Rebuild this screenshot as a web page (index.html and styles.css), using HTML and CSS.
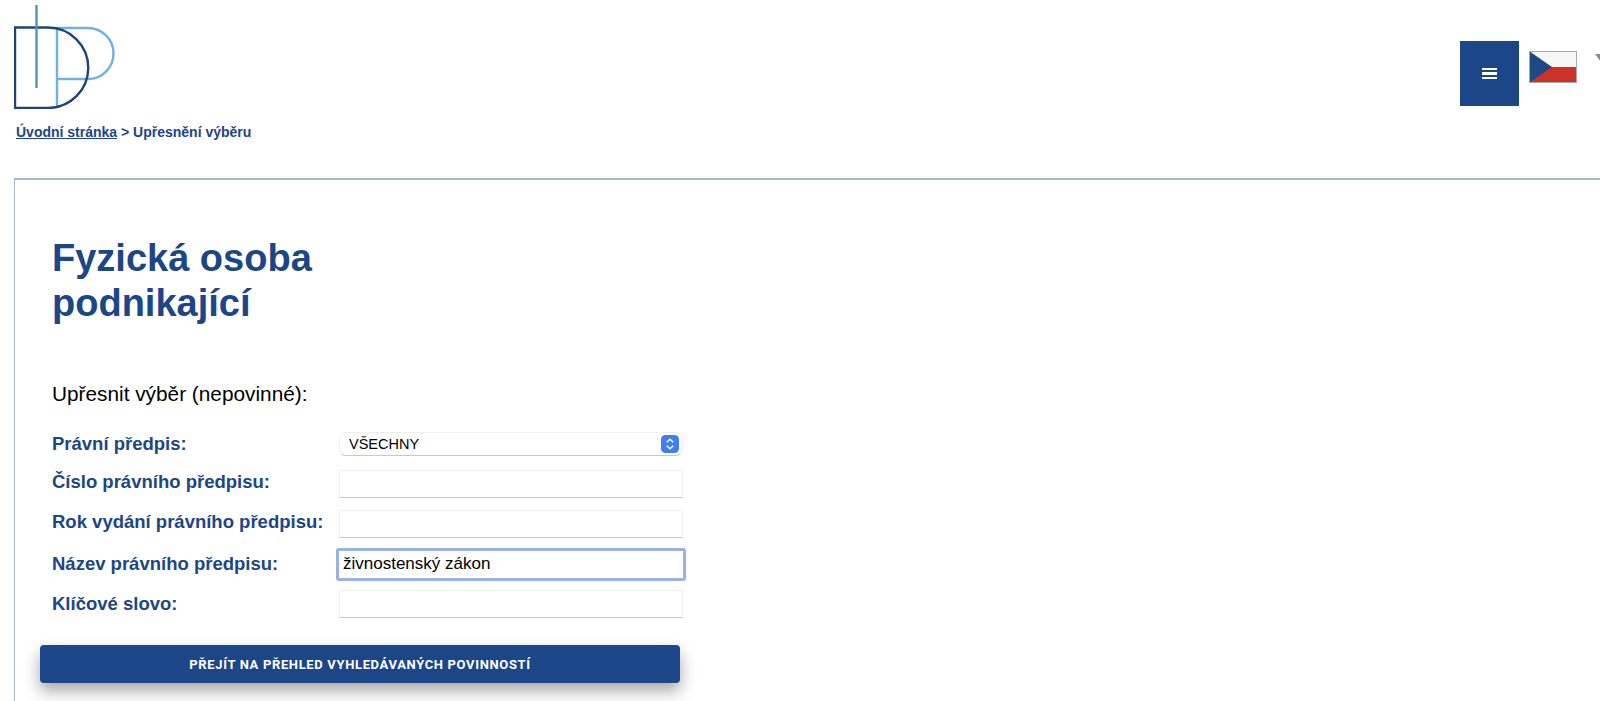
FILE: index.html
```html
<!DOCTYPE html>
<html lang="cs">
<head>
    <meta charset="UTF-8">
    <meta name="viewport" content="width=device-width, initial-scale=1.0">
    <title>Upřesnění výběru</title>
    <link rel="stylesheet" href="styles.css">
</head>
<body>

    <header class="top-bar">
        <div class="brand">
            <svg class="logo" viewBox="0 0 102 104" width="102" height="104">
                <path d="M43 23H74A25.500 25.500 0 0 1 74 74H43M43 23V102" fill="none" stroke="#6cb2e6" stroke-width="2.400"/>
                <path d="M34 22.500A40.250 40.250 0 0 1 34 103H1V22.500Z" fill="none" stroke="#1f4478" stroke-width="2.400"/>
                <path d="M22.500 0V83" fill="none" stroke="#4f97b0" stroke-width="2.400"/>
            </svg>
            <p class="breadcrumb"><a href="#">Úvodní stránka</a> &gt; Upřesnění výběru</p>
        </div>
        <div class="top-actions">
            <button class="menu-button" type="button" aria-label="Menu">
                <span></span><span></span><span></span>
            </button>
            <svg class="flag" viewBox="0 0 48 32" width="48" height="32">
                <rect width="48" height="16" fill="#f6f6f6"/>
                <rect y="16" width="48" height="16" fill="#cd3229"/>
                <path d="M0 0L23 16L0 32Z" fill="#1e4a84"/>
                <rect x="0.500" y="0.500" width="47" height="31" fill="none" stroke="#a9a9a9"/>
            </svg>
            <span class="lang-arrow"></span>
        </div>
    </header>

    <main class="content-box">
        <h1>Fyzická osoba<br>podnikající</h1>
        <p class="intro">Upřesnit výběr (nepovinné):</p>

        <form class="filter-form">
            <div class="form-row">
                <label for="predpis">Právní předpis:</label>
                <div class="select-wrap">
                    <select id="predpis">
                        <option>VŠECHNY</option>
                    </select>
                    <svg class="select-arrows" viewBox="0 0 18 18" width="18" height="18">
                        <rect width="18" height="18" rx="4.500" fill="#3f7ff0"/>
                        <path d="M5.800 7.300L9 4.300L12.200 7.300M5.800 10.700L9 13.700L12.200 10.700" fill="none" stroke="#fff" stroke-width="1.500"/>
                    </svg>
                </div>
            </div>
            <div class="form-row">
                <label class="raised" for="cislo">Číslo právního předpisu:</label>
                <input id="cislo" type="text">
            </div>
            <div class="form-row">
                <label class="raised" for="rok">Rok vydání právního předpisu:</label>
                <input id="rok" type="text">
            </div>
            <div class="form-row">
                <label for="nazev">Název právního předpisu:</label>
                <input id="nazev" class="focused" type="text" value="živnostenský zákon">
            </div>
            <div class="form-row">
                <label for="slovo">Klíčové slovo:</label>
                <input id="slovo" type="text">
            </div>
            <button class="submit-button" type="button">Přejít na přehled vyhledávaných povinností</button>
        </form>
    </main>

</body>
</html>
```

FILE: styles.css
```css
html, body {
    height: 100%;
    overflow: hidden;
}
body {
    margin: 0;
    background-color: #fff;
    color: #000;
    font-family: "Liberation Sans", Arial, sans-serif;
}
.top-bar {
    display: flex;
    justify-content: space-between;
    height: 178px;
    padding: 5px 0 0 14px;
    box-sizing: border-box;
}
.logo {
    display: block;
}
.breadcrumb {
    margin: 15px 0 0 2px;
    font-size: 14px;
    line-height: 16px;
    font-weight: bold;
    color: #1b4688;
}
.breadcrumb a {
    color: #1b4688;
}
.top-actions {
    display: flex;
    align-items: flex-start;
    gap: 10px;
    margin-right: -7px;
    padding-top: 36px;
}
.menu-button {
    display: flex;
    flex-direction: column;
    align-items: center;
    justify-content: center;
    gap: 2px;
    width: 59px;
    height: 65px;
    padding: 0;
    border: 0;
    background-color: #1b4688;
}
.menu-button span {
    width: 15px;
    height: 2.500px;
    background-color: #fff;
}
.flag {
    margin-top: 10px;
}
.lang-arrow {
    width: 0;
    height: 0;
    margin: 13px 0 0 8px;
    border-top: 8px solid #8a8a8a;
    border-left: 6px solid transparent;
    border-right: 6px solid transparent;
}
.content-box {
    margin: 0 -20px 0 14px;
    height: 523px;
    padding: 56px 0 0 37px;
    border: 1px solid #a9b8cc;
    border-width: 2px 0 0 1.500px;
    box-sizing: border-box;
}
h1 {
    margin: 0;
    font-size: 38px;
    line-height: 45px;
    font-weight: bold;
    color: #1b4688;
}
.intro {
    margin: 56px 0 0;
    font-size: 20.800px;
    line-height: 24px;
}
.filter-form {
    width: 640px;
    margin-top: 18px;
}
.form-row {
    display: flex;
    align-items: center;
    height: 40px;
}
.form-row label {
    width: 287px;
    font-size: 18.500px;
    font-weight: bold;
    color: #1b4688;
}
.form-row label.raised {
    padding-bottom: 4px;
}
.form-row input,
.select-wrap {
    width: 344px;
    box-sizing: border-box;
}
.form-row input {
    height: 28px;
    padding: 0 4px;
    border: 1px solid #f0f0f0;
    border-bottom-color: #c8c8c8;
    border-radius: 0;
    background-color: #fff;
    font-family: "Liberation Sans", Arial, sans-serif;
    font-size: 17px;
    outline: none;
}
.form-row input.focused {
    width: 350px;
    height: 33px;
    margin-left: -3px;
    padding: 0 1px 0 4px;
    border: 3px solid #98b1e6;
    border-radius: 3px;
}
.select-wrap {
    position: relative;
    height: 24px;
}
.select-wrap select {
    appearance: none;
    display: block;
    width: 100%;
    height: 24px;
    padding: 0 9px;
    border: 1px solid #efefef;
    border-bottom-color: #c8c8c8;
    border-radius: 7px;
    background-color: #fff;
    color: #000;
    font-family: "Liberation Sans", Arial, sans-serif;
    font-size: 14.500px;
}
.select-arrows {
    position: absolute;
    top: 3px;
    right: 4px;
}
.submit-button {
    display: block;
    width: 640px;
    height: 38px;
    margin: 21px 0 0 -12px;
    border: 0;
    border-radius: 4px;
    background-color: #1b4688;
    box-shadow: 0 8px 16px rgba(0, 0, 0, 0.35);
    color: #fff;
    font-family: Roboto, "Liberation Sans", sans-serif;
    font-size: 13px;
    font-weight: bold;
    letter-spacing: 0.65px;
    text-transform: uppercase;
}
```
